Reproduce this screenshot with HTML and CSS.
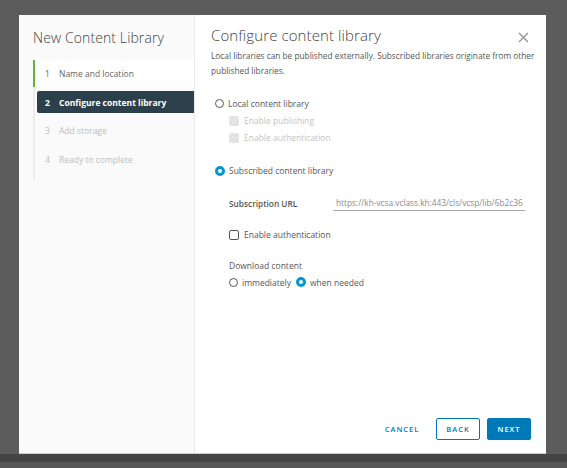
FILE: index.html
```html
<!DOCTYPE html>
<html>
<head>
<meta charset="utf-8">
<link rel="stylesheet" href="styles.css">
</head>
<body>
<div class="stage">
  <div class="modal">
    <div class="side">
      <div class="side-title">New Content Library</div>
      <div class="steps">
        <div class="step done"><span class="num">1</span>Name and location</div>
        <div class="step active"><span class="num">2</span>Configure content library</div>
        <div class="step todo"><span class="num">3</span>Add storage</div>
        <div class="step todo"><span class="num">4</span>Ready to complete</div>
      </div>
    </div>
    <div class="main">
      <div class="head">
        <div class="title">Configure content library</div>
        <svg class="close" width="11" height="11" viewBox="0 0 11 11"><path d="M1 1L10 10M10 1L1 10" stroke="#8c8c8c" stroke-width="1.1" fill="none"/></svg>
      </div>
      <p class="desc">Local libraries can be published externally. Subscribed libraries originate from other published libraries.</p>
      <div class="opt r1"><span class="radio"></span>Local content library</div>
      <div class="opt sub dis"><span class="cb disabled"></span>Enable publishing</div>
      <div class="opt sub dis"><span class="cb disabled"></span>Enable authentication</div>
      <div class="opt r2"><span class="radio on"></span>Subscribed content library</div>
      <div class="url-row">
        <span class="lbl">Subscription URL</span>
        <div class="input">https://kh-vcsa.vclass.kh:443/cls/vcsp/lib/6b2c36</div>
      </div>
      <div class="opt sub auth"><span class="cb"></span>Enable authentication</div>
      <div class="dl-label">Download content</div>
      <div class="dl-row">
        <span class="opt-inline"><span class="radio"></span>immediately</span>
        <span class="opt-inline"><span class="radio on"></span>when needed</span>
      </div>
      <div class="spacer"></div>
      <div class="footer">
        <button class="btn link">CANCEL</button>
        <button class="btn outline">BACK</button>
        <button class="btn primary">NEXT</button>
      </div>
    </div>
  </div>
</div>
<div class="band"></div>
</body>
</html>
```
FILE: styles.css
```css
html, body { margin: 0; padding: 0; }
body {
  width: 567px; height: 468px; overflow: hidden;
  background: #575757;
  font-family: "Open Sans", "Liberation Sans", sans-serif;
  color: #565656;
}
.stage {
  height: 439px;
  padding: 15px 0 0 19px;
  background: #5c5c5c;
}
.band { height: 8px; background: #454545; }
.modal {
  width: 527px; height: 438px;
  display: flex;
  background: #fff;
  border-bottom: 1px solid #cfcfcf;
}
.side {
  flex: none;
  width: 175px;
  background: #fafafa;
  border-right: 1px solid #e8e8e8;
  padding-top: 14px;
}
.side-title {
  padding-left: 14px;
  font-size: 14px; font-weight: 300; color: #444;
  line-height: 18px;
  height: 31px;
  letter-spacing: 0.1px;
}
.steps {
  margin-left: 14px;
  border-left: 2px solid #ececec;
  padding-bottom: 6px;
  display: flex; flex-direction: column;
}
.step {
  font-size: 8.5px;
  display: flex; align-items: center;
  padding-left: 10px;
}
.num { width: 14px; }
.step.done {
  height: 27px;
  background: #fff;
  margin-left: -2px;
  border-left: 2px solid #62b53a;
  color: #666;
}
.step.active {
  height: 22px;
  margin-top: 4px;
  margin-left: 2px;
  padding-left: 8px;
  background: #2c404c;
  color: #fff;
  font-weight: 700;
  border-radius: 2px 0 0 2px;
}
.step.todo { height: 29px; color: #bdbdbd; }
.step.todo:nth-child(3) { margin-top: 3px; }

.main {
  flex: 1;
  min-width: 0;
  padding: 0 15px 0 16px;
  display: flex; flex-direction: column;
}
.head {
  display: flex; justify-content: space-between; align-items: center;
  height: 20px;
  margin-top: 10px;
}
.title { font-size: 15px; font-weight: 300; color: #444; letter-spacing: 0.1px; }
.close { margin-right: 2px; margin-top: 4px; }
.desc {
  margin: 3px 0 0 0;
  font-size: 8.3px; line-height: 15px; color: #565656;
  width: 330px;
}
.opt {
  display: flex; align-items: center;
  font-size: 8.5px; color: #565656;
  height: 17px;
}
.r1 { margin-top: 17px; padding-left: 4px; }
.sub { padding-left: 18px; }
.dis { color: #c4c4c4; }
.r2 { margin-top: 16px; padding-left: 4px; }
.radio {
  width: 9px; height: 9px; border-radius: 50%;
  border: 1px solid #555;
  box-sizing: border-box;
  margin-right: 4px;
  background: #fff;
  flex: none;
}
.radio.on {
  border: 3px solid #0095d3;
  background: #fff;
  width: 10px; height: 10px;
}
.cb {
  width: 10px; height: 10px; box-sizing: border-box;
  border: 1px solid #555; border-radius: 2px;
  margin-right: 5px; flex: none;
}
.cb.disabled { background: #e3e3e3; border-color: #e3e3e3; }
.url-row {
  display: flex; align-items: center;
  margin-top: 15px;
  padding-left: 18px;
  height: 18px;
}
.lbl { width: 104px; font-size: 8.3px; font-weight: 600; color: #565656; }
.input {
  width: 192px; overflow: hidden; white-space: nowrap;
  font-size: 8.3px; color: #8a8a8a;
  border-bottom: 1px solid #aaa;
  height: 15px; line-height: 14px;
  padding-left: 3px; box-sizing: border-box;
}
.auth { margin-top: 14px; }
.dl-label { margin-top: 17px; padding-left: 18px; font-size: 8.5px; height: 12px; line-height: 12px; }
.dl-row { display: flex; gap: 5px; padding-left: 18px; margin-top: 4px; font-size: 8.5px; height: 12px; align-items: center; }
.opt-inline { display: flex; align-items: center; }
.spacer { flex: 1; }
.footer {
  display: flex; justify-content: flex-end; align-items: center;
  gap: 7px;
  margin-bottom: 13px;
}
.btn {
  font-family: inherit;
  font-size: 7.5px; font-weight: 600; letter-spacing: 1px;
  height: 22px; width: 44px;
  border-radius: 2px;
  padding: 0; box-sizing: border-box;
}
.btn.link { border: none; background: none; color: #0079b8; width: 44px; margin-right: 5px; }
.btn.outline { border: 1px solid #0079b8; background: #fff; color: #0079b8; }
.btn.primary { border: 1px solid #0079b8; background: #0079b8; color: #fff; }
```
